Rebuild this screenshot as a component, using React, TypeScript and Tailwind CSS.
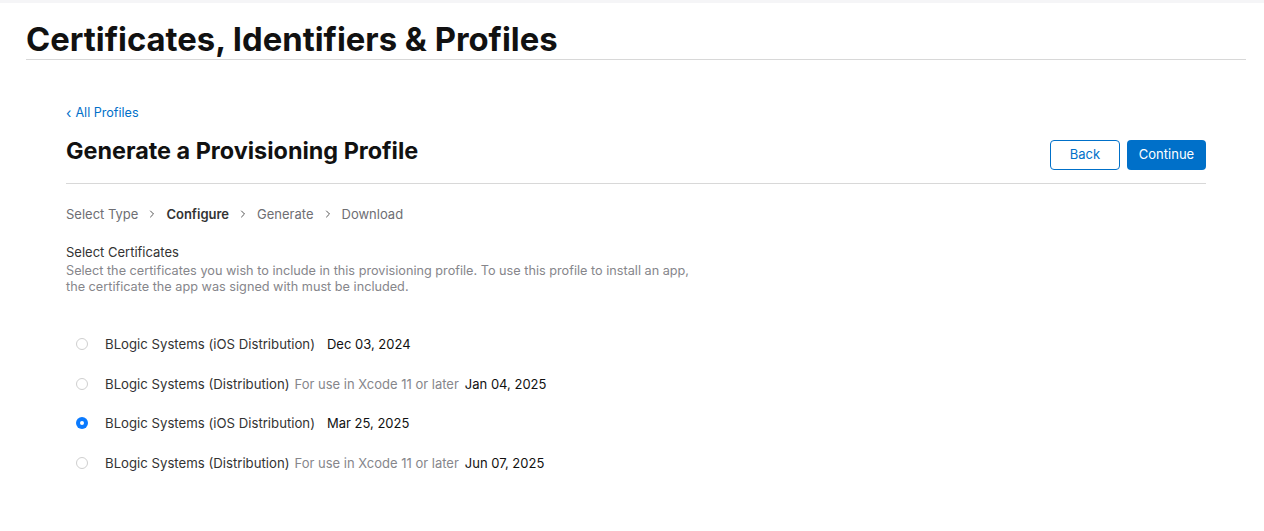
import { ChevronRight } from 'lucide-react'

const certs = [
  { name: 'BLogic Systems (iOS Distribution)', note: '', date: 'Dec 03, 2024', checked: false },
  { name: 'BLogic Systems (Distribution)', note: 'For use in Xcode 11 or later', date: 'Jan 04, 2025', checked: false },
  { name: 'BLogic Systems (iOS Distribution)', note: '', date: 'Mar 25, 2025', checked: true },
  { name: 'BLogic Systems (Distribution)', note: 'For use in Xcode 11 or later', date: 'Jun 07, 2025', checked: false },
]

function Radio({ checked }: { checked: boolean }) {
  if (checked) {
    return (
      <span className="flex h-[12px] w-[12px] items-center justify-center rounded-full bg-[#0a7aff]">
        <span className="h-[4px] w-[4px] rounded-full bg-white" />
      </span>
    )
  }
  return <span className="h-[12px] w-[12px] rounded-full border border-[#cfcfcf] bg-white" />
}

export default function App() {
  const steps = ['Select Type', 'Configure', 'Generate', 'Download']
  return (
    <div className="min-h-[531px] bg-white font-['Inter','Liberation_Sans',sans-serif] text-[#1d1d1f]">
      <div className="h-[3px] bg-[#f5f5f7]" />

      {/* Page header */}
      <div className="px-[26px] pr-[18px]">
        <h1 className="pt-[17px] pb-[1px] text-[32.8px] font-bold leading-[38px] text-[#111]">
          Certificates, Identifiers &amp; Profiles
        </h1>
        <div className="h-px bg-[#d8d8d8]" />
      </div>

      <div className="px-[66px] pr-[58px] pt-[45px]">
        <a href="#" className="flex items-center text-[12.6px] leading-[16px] text-[#0070c9]">
          <span className="mr-[4px] text-[14px] leading-[16px]">‹</span>
          All Profiles
        </a>

        <div className="mt-[15px] flex items-start justify-between">
          <h2 className="text-[23.4px] font-bold leading-[30px] text-[#111]">Generate a Provisioning Profile</h2>
          <div className="mt-[4px] flex gap-[7px]">
            <button className="h-[30px] w-[70px] rounded-[4px] border border-[#0070c9] bg-white text-[13px] text-[#0070c9]">
              Back
            </button>
            <button className="h-[30px] w-[79px] rounded-[4px] bg-[#0070c9] text-[13px] text-white">
              Continue
            </button>
          </div>
        </div>

        <div className="mt-[13px] h-px bg-[#d8d8d8]" />

        {/* Steps */}
        <div className="mt-[21px] flex items-center text-[13px] leading-[18px] text-[#6e6e73]">
          {steps.map((s, i) => (
            <div key={s} className="flex items-center">
              {i > 0 && <ChevronRight className="mx-[8px] h-[12px] w-[12px] text-[#555]" strokeWidth={2} />}
              <span className={s === 'Configure' ? 'font-semibold text-[#333]' : ''}>{s}</span>
            </div>
          ))}
        </div>

        {/* Section */}
        <div className="mt-[20px]">
          <div className="mb-[2px] text-[13px] leading-[18px] text-[#333]">Select Certificates</div>
          <p className="max-w-[630px] text-[12.7px] leading-[16px] text-[#86868b]">
            Select the certificates you wish to include in this provisioning profile. To use this profile to install an app,
            the certificate the app was signed with must be included.
          </p>
        </div>

        <div className="mt-[40px] flex flex-col gap-[21.7px] pl-[10px]">
          {certs.map((c, i) => (
            <label key={i} className="flex h-[18px] items-center text-[13.2px] leading-[18px]">
              <Radio checked={c.checked} />
              <span className="ml-[17px] text-[#333]">{c.name}</span>
              {c.note ? (
                <span className="ml-[5px] text-[13px] text-[#86868b]">{c.note}</span>
              ) : null}
              <span className={`${c.note ? 'ml-[6px]' : 'ml-[12px]'} text-[13px] text-[#111]`}>
                {c.date}
              </span>
            </label>
          ))}
        </div>
      </div>
    </div>
  )
}
